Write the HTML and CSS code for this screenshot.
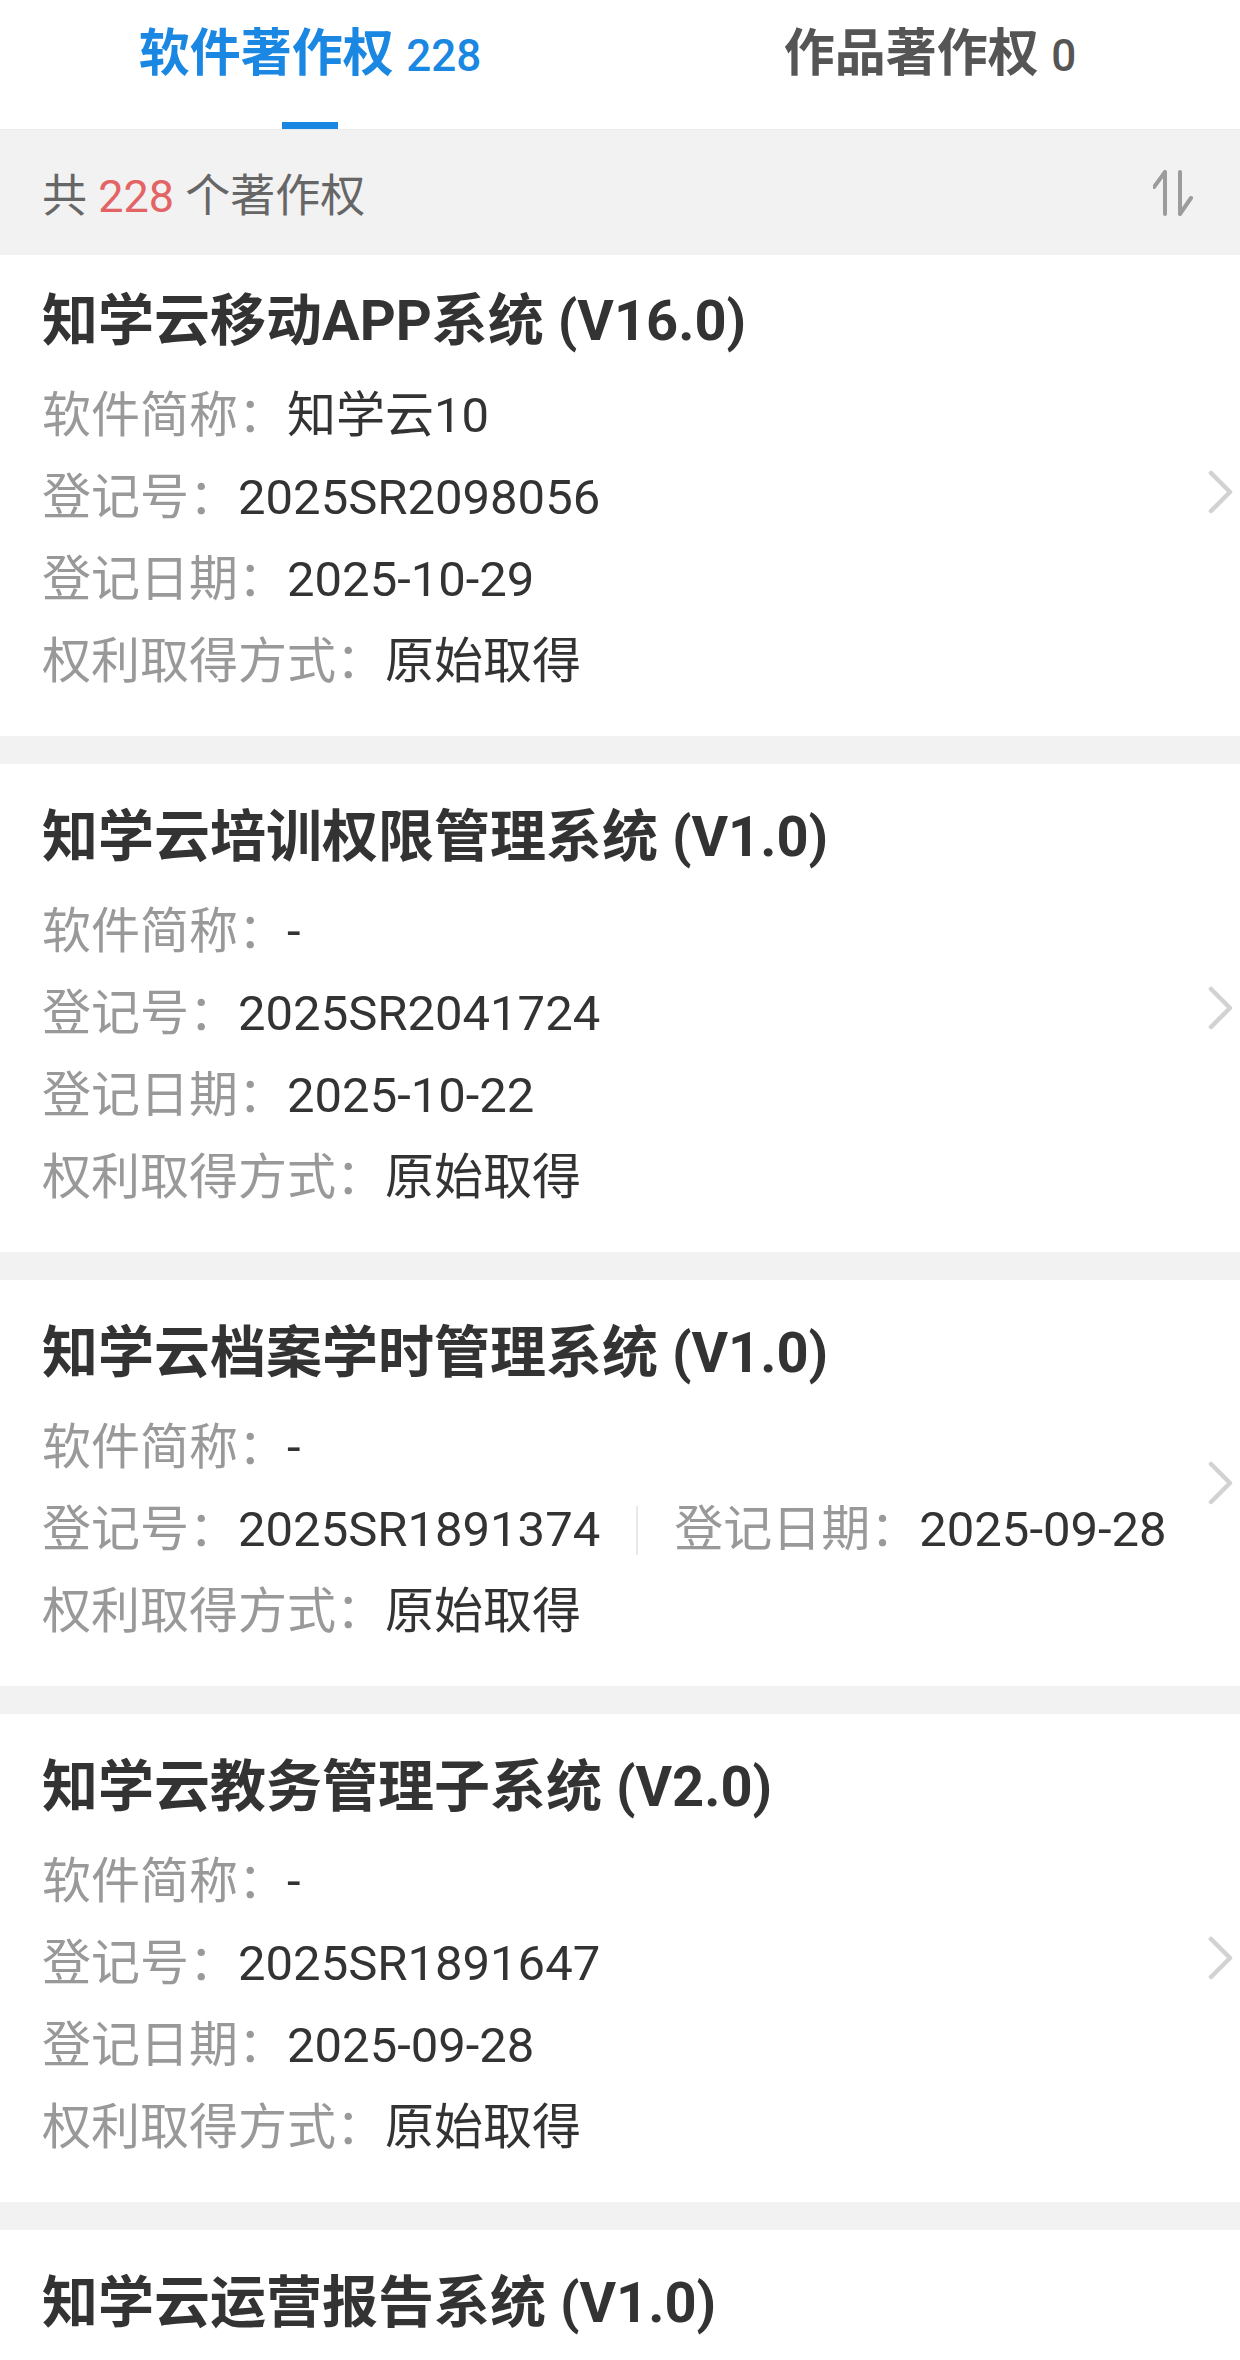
FILE: index.html
```html
<!DOCTYPE html>
<html lang="zh-CN">
<head>
  <meta charset="UTF-8" />
  <title>著作权</title>
  <link rel="stylesheet" href="styles.css">
</head>
<body>
  <div class="tabs">
    <div class="tab active">
      <div class="tab-label">软件著作权 <span class="tab-count">228</span></div>
      <div class="tab-line"></div>
    </div>
    <div class="tab">
      <div class="tab-label">作品著作权 <span class="tab-count">0</span></div>
      <div class="tab-line"></div>
    </div>
  </div>

  <div class="summary">
    <span>共 <em>228</em> 个著作权</span>
    <svg class="sort" width="40" height="46" viewBox="0 0 40 46">
      <path d="M12 2 V44 M12 2 L1 17 M27 2 V44 M27 44 L38 28" />
    </svg>
  </div>

  <div class="list">
    <div class="card">
      <div class="card-body">
        <div class="title">知学云移动APP系统 (V16.0)</div>
        <div class="row"><span class="label">软件简称：</span><span class="value">知学云10</span></div>
        <div class="row"><span class="label">登记号：</span><span class="value">2025SR2098056</span></div>
        <div class="row"><span class="label">登记日期：</span><span class="value">2025-10-29</span></div>
        <div class="row"><span class="label">权利取得方式：</span><span class="value">原始取得</span></div>
      </div>
      <svg class="chevron" width="26" height="44" viewBox="0 0 26 44"><polyline points="3,3 22,22 3,41" /></svg>
    </div>

    <div class="card">
      <div class="card-body">
        <div class="title">知学云培训权限管理系统 (V1.0)</div>
        <div class="row"><span class="label">软件简称：</span><span class="value">-</span></div>
        <div class="row"><span class="label">登记号：</span><span class="value">2025SR2041724</span></div>
        <div class="row"><span class="label">登记日期：</span><span class="value">2025-10-22</span></div>
        <div class="row"><span class="label">权利取得方式：</span><span class="value">原始取得</span></div>
      </div>
      <svg class="chevron" width="26" height="44" viewBox="0 0 26 44"><polyline points="3,3 22,22 3,41" /></svg>
    </div>

    <div class="card">
      <div class="card-body">
        <div class="title">知学云档案学时管理系统 (V1.0)</div>
        <div class="row"><span class="label">软件简称：</span><span class="value">-</span></div>
        <div class="row">
          <span class="label">登记号：</span><span class="value">2025SR1891374</span>
          <span class="sep"></span>
          <span class="label">登记日期：</span><span class="value">2025-09-28</span>
        </div>
        <div class="row"><span class="label">权利取得方式：</span><span class="value">原始取得</span></div>
      </div>
      <svg class="chevron" width="26" height="44" viewBox="0 0 26 44"><polyline points="3,3 22,22 3,41" /></svg>
    </div>

    <div class="card">
      <div class="card-body">
        <div class="title">知学云教务管理子系统 (V2.0)</div>
        <div class="row"><span class="label">软件简称：</span><span class="value">-</span></div>
        <div class="row"><span class="label">登记号：</span><span class="value">2025SR1891647</span></div>
        <div class="row"><span class="label">登记日期：</span><span class="value">2025-09-28</span></div>
        <div class="row"><span class="label">权利取得方式：</span><span class="value">原始取得</span></div>
      </div>
      <svg class="chevron" width="26" height="44" viewBox="0 0 26 44"><polyline points="3,3 22,22 3,41" /></svg>
    </div>

    <div class="card">
      <div class="card-body">
        <div class="title">知学云运营报告系统 (V1.0)</div>
      </div>
    </div>
  </div>
</body>
</html>
```

FILE: styles.css
```css
body {
  margin: 0;
  background: #f2f2f2;
  font-family: Roboto, "Noto Sans CJK SC", sans-serif;
  color: #333;
  overflow: hidden;
}
.tabs {
  display: flex;
  height: 130px;
  background: #fff;
  border-bottom: 1px solid #ececec;
  box-sizing: border-box;
}
.tab {
  flex: 1;
  display: flex;
  flex-direction: column;
  align-items: center;
}
.tab-label {
  height: 108px;
  line-height: 108px;
  font-size: 51px;
  font-weight: bold;
  color: #555;
  white-space: nowrap;
}
.tab-count {
  font-size: 44px;
  font-weight: 500;
}
.tab-line {
  width: 56px;
  height: 7px;
  margin-top: 14px;
}
.tab.active .tab-label {
  color: #1a87e2;
}
.tab.active .tab-line {
  background: #1a87e2;
}
.summary {
  height: 125px;
  display: flex;
  align-items: center;
  justify-content: space-between;
  padding: 0 47px 0 42px;
  font-size: 45px;
  color: #666;
}
.summary em {
  font-style: normal;
  color: #e36464;
}
.sort path {
  fill: none;
  stroke: #9c9c9c;
  stroke-width: 4;
  stroke-linecap: round;
  stroke-linejoin: round;
}
.card {
  display: flex;
  align-items: center;
  background: #fff;
  padding: 33px 6px 33px 42px;
  margin-bottom: 28px;
}
.card:first-child {
  padding-top: 26px;
}
.card-body {
  flex: 1;
  min-width: 0;
}
.title {
  font-size: 56px;
  font-weight: bold;
  line-height: 80px;
  height: 80px;
  margin-bottom: 14px;
  color: #333;
  white-space: nowrap;
}
.row {
  display: flex;
  align-items: center;
  height: 82px;
  line-height: 82px;
  font-size: 49px;
  white-space: nowrap;
}
.label {
  color: #999;
}
.value {
  color: #333;
}
.sep {
  width: 2px;
  height: 49px;
  background: #e8e8e8;
  margin: 0 36px;
}
.chevron polyline {
  fill: none;
  stroke: #d2d2d2;
  stroke-width: 4.5;
  stroke-linecap: round;
  stroke-linejoin: round;
}
```
